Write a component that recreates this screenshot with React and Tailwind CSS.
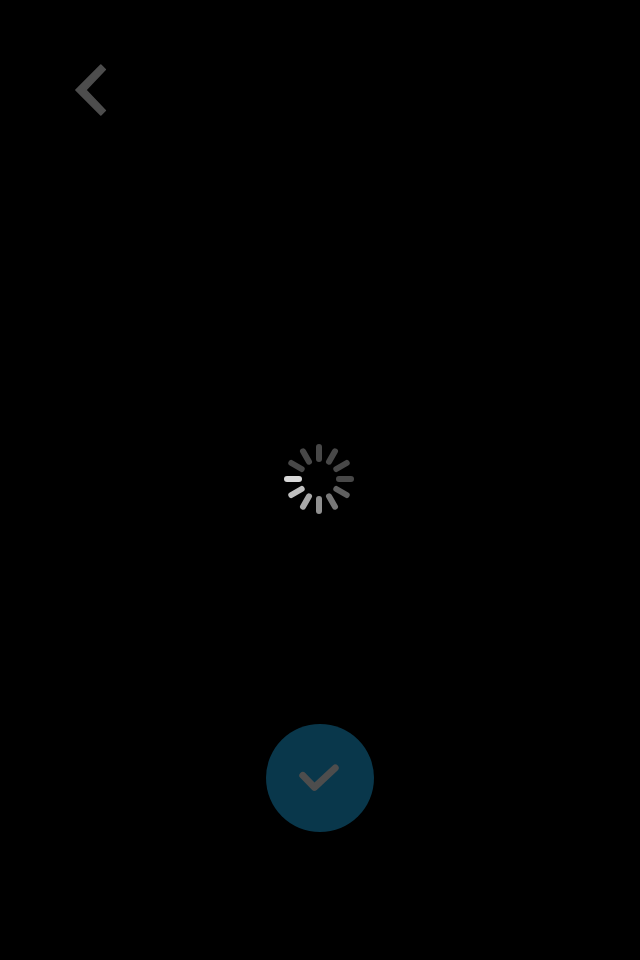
const spokes = [
  [0, '#484848'],
  [30, '#484848'],
  [60, '#484848'],
  [90, '#484848'],
  [120, '#606060'],
  [150, '#787878'],
  [180, '#909090'],
  [210, '#a8a8a8'],
  [240, '#c0c0c0'],
  [270, '#d8d8d8'],
  [300, '#484848'],
  [330, '#484848'],
];

function BackButton() {
  return (
    <button aria-label="Back" className="block h-[52px] w-8">
      <svg viewBox="0 0 32 52" className="block h-[52px] w-8">
        <path
          d="M25.8 1 L30.3 5.5 L10.8 26 L30.3 46.5 L25.8 51 L.9 26 Z"
          fill="#4d4d4d"
          stroke="#4d4d4d"
          strokeWidth="1.6"
          strokeLinejoin="round"
        />
      </svg>
    </button>
  );
}

function Spinner() {
  return (
    <svg viewBox="-35 -35 70 70" role="status" aria-label="Loading" className="block size-[70px]">
      {spokes.map(([angle, color]) => (
        <rect
          key={angle}
          x="-3"
          y="-35"
          width="6"
          height="18"
          rx="3"
          fill={color}
          transform={`rotate(${angle})`}
        />
      ))}
    </svg>
  );
}

function ConfirmButton() {
  return (
    <button
      aria-label="Confirm"
      className="flex size-[108px] items-center justify-center rounded-full bg-[#09374b]"
    >
      <svg viewBox="0 0 108 108" className="block size-[108px]" fill="none">
        <path
          d="M36.8 51.4 L48.4 63.4 L69.2 44"
          stroke="#4d4d4d"
          strokeWidth="7"
          strokeLinecap="round"
          strokeLinejoin="round"
        />
      </svg>
    </button>
  );
}

export default function App() {
  return (
    <main className="flex h-[960px] w-[640px] flex-col overflow-hidden bg-black pt-16">
      <header className="pl-[75px]">
        <BackButton />
      </header>
      <div className="mt-[328px] pl-[284px]">
        <Spinner />
      </div>
      <footer className="mt-[210px] flex justify-center">
        <ConfirmButton />
      </footer>
    </main>
  );
}
